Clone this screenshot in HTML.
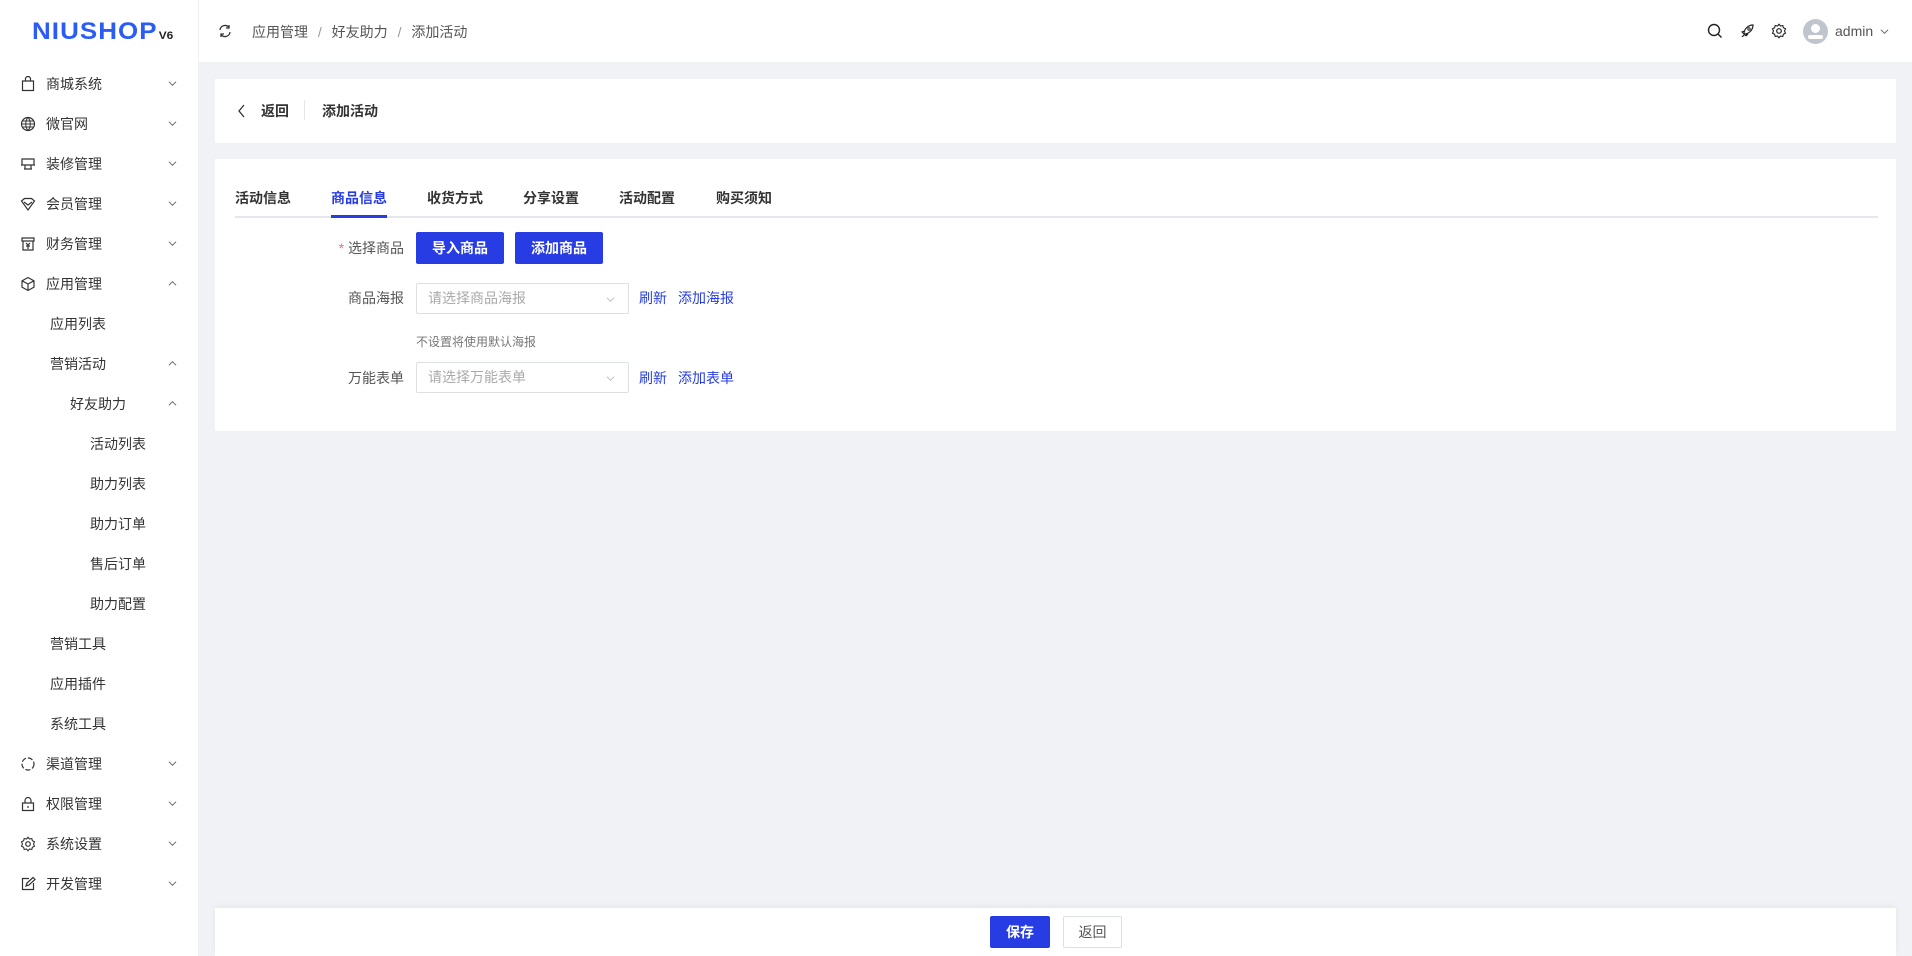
<!DOCTYPE html>
<html><head><meta charset="utf-8"><style>
*{margin:0;padding:0;box-sizing:border-box}
body{width:1912px;height:956px;overflow:hidden;background:#f0f2f5;font-family:"Liberation Sans","Noto Sans CJK SC",sans-serif;font-size:14px;color:#333;position:relative}
.side{position:absolute;left:0;top:0;width:199px;height:956px;background:#fff;border-right:1px solid #eef0f3}
.logo{position:absolute;left:32px;top:18px;font-weight:bold;font-size:24px;color:#2b5cf6;letter-spacing:1px;font-family:"Liberation Sans",sans-serif;transform:scaleX(1.08);transform-origin:left}
.logo small{font-size:11px;color:#222;margin-left:1px;letter-spacing:0}
.mi{position:absolute;left:0;width:199px;height:20px;line-height:20px;font-size:14px;color:#333}
.mi .ic{position:absolute;left:20px;top:2px;width:16px;height:16px}
.mi .chev{position:absolute;left:168px;top:5px;width:9px;height:9px}
.head{position:absolute;left:199px;top:0;right:0;height:62px;background:#fff}
.card{position:absolute;background:#fff}
.tab{position:absolute;top:188px;font-size:14px;font-weight:bold;color:#333}
.lbl{position:absolute;width:120px;text-align:right;left:284px;font-size:14px;color:#555}
.btn{position:absolute;background:#273de3;color:#fff;font-weight:bold;font-size:14px;text-align:center;border-radius:2px}
.sel{position:absolute;left:416px;width:213px;height:31px;border:1px solid #dcdfe6;border-radius:2px;color:#aaa;font-size:14px;line-height:29px;padding-left:11px}
.lnk{position:absolute;color:#273de3;font-size:14px}
</style></head><body>
<div class="side">
<div class="logo">NIUSHOP<small>V6</small></div>
</div>
<svg width="0" height="0" style="position:absolute"><defs>
<symbol id="cd" viewBox="0 0 10 10"><path d="M1 3l4 4 4-4" fill="none" stroke="#666" stroke-width="1.1"/></symbol>
<symbol id="cu" viewBox="0 0 10 10"><path d="M1 7l4-4 4 4" fill="none" stroke="#666" stroke-width="1.1"/></symbol>
</defs></svg>
<div class="mi" style="top:74px"><svg class="ic" viewBox="0 0 16 16"><path d="M2.5 5h11v9.5h-11zM5.5 5V3a2.5 2.5 0 015 0v2" fill="none" stroke="#333" stroke-width="1.2"/></svg><span style="position:absolute;left:46px">商城系统</span><svg class="chev"><use href="#cd"/></svg></div>
<div class="mi" style="top:114px"><svg class="ic" viewBox="0 0 16 16"><circle cx="8" cy="8" r="6.5" fill="none" stroke="#333" stroke-width="1.2"/><path d="M1.5 8h13M8 1.5c-3 3-3 10 0 13M8 1.5c3 3 3 10 0 13M2.5 5h11M2.5 11h11" fill="none" stroke="#333" stroke-width="1"/></svg><span style="position:absolute;left:46px">微官网</span><svg class="chev"><use href="#cd"/></svg></div>
<div class="mi" style="top:154px"><svg class="ic" viewBox="0 0 16 16"><path d="M2 3h12v6H2zM1 9h14M5 9v4M11 9v4M4 13h8" fill="none" stroke="#333" stroke-width="1.2"/></svg><span style="position:absolute;left:46px">装修管理</span><svg class="chev"><use href="#cd"/></svg></div>
<div class="mi" style="top:194px"><svg class="ic" viewBox="0 0 16 16"><path d="M1.5 5l3-2.5h7l3 2.5L8 14z M4 6l4 3 4-3" fill="none" stroke="#333" stroke-width="1.2"/></svg><span style="position:absolute;left:46px">会员管理</span><svg class="chev"><use href="#cd"/></svg></div>
<div class="mi" style="top:234px"><svg class="ic" viewBox="0 0 16 16"><path d="M2 2h12v3H2zM3 5v9h10V5M6 7l2 2 2-2M8 9v4M6 10h4" fill="none" stroke="#333" stroke-width="1.2"/></svg><span style="position:absolute;left:46px">财务管理</span><svg class="chev"><use href="#cd"/></svg></div>
<div class="mi" style="top:274px"><svg class="ic" viewBox="0 0 16 16"><path d="M8 1.5l6 3.3v6.4L8 14.5 2 11.2V4.8zM2 4.8L8 8l6-3.2M8 8v6.5" fill="none" stroke="#333" stroke-width="1.2"/></svg><span style="position:absolute;left:46px">应用管理</span><svg class="chev"><use href="#cu"/></svg></div>
<div class="mi" style="top:314px"><span style="position:absolute;left:50px">应用列表</span></div>
<div class="mi" style="top:354px"><span style="position:absolute;left:50px">营销活动</span><svg class="chev"><use href="#cu"/></svg></div>
<div class="mi" style="top:394px"><span style="position:absolute;left:70px">好友助力</span><svg class="chev"><use href="#cu"/></svg></div>
<div class="mi" style="top:434px"><span style="position:absolute;left:90px">活动列表</span></div>
<div class="mi" style="top:474px"><span style="position:absolute;left:90px">助力列表</span></div>
<div class="mi" style="top:514px"><span style="position:absolute;left:90px">助力订单</span></div>
<div class="mi" style="top:554px"><span style="position:absolute;left:90px">售后订单</span></div>
<div class="mi" style="top:594px"><span style="position:absolute;left:90px">助力配置</span></div>
<div class="mi" style="top:634px"><span style="position:absolute;left:50px">营销工具</span></div>
<div class="mi" style="top:674px"><span style="position:absolute;left:50px">应用插件</span></div>
<div class="mi" style="top:714px"><span style="position:absolute;left:50px">系统工具</span></div>
<div class="mi" style="top:754px"><svg class="ic" viewBox="0 0 16 16"><circle cx="8" cy="8" r="6" fill="none" stroke="#333" stroke-width="1.2" stroke-dasharray="5 2"/></svg><span style="position:absolute;left:46px">渠道管理</span><svg class="chev"><use href="#cd"/></svg></div>
<div class="mi" style="top:794px"><svg class="ic" viewBox="0 0 16 16"><path d="M2.5 7h11v7.5h-11zM5 7V4.5a3 3 0 016 0V7M8 10v2" fill="none" stroke="#333" stroke-width="1.2"/></svg><span style="position:absolute;left:46px">权限管理</span><svg class="chev"><use href="#cd"/></svg></div>
<div class="mi" style="top:834px"><svg class="ic" viewBox="0 0 16 16"><circle cx="8" cy="8" r="2.3" fill="none" stroke="#333" stroke-width="1.2"/><path d="M8 1.2l1.5 1.8 2.3-.5.6 2.3 2.1 1-1 2.2 1 2.2-2.1 1-.6 2.3-2.3-.5L8 14.8l-1.5-1.8-2.3.5-.6-2.3-2.1-1 1-2.2-1-2.2 2.1-1 .6-2.3 2.3.5z" fill="none" stroke="#333" stroke-width="1.1"/></svg><span style="position:absolute;left:46px">系统设置</span><svg class="chev"><use href="#cd"/></svg></div>
<div class="mi" style="top:874px"><svg class="ic" viewBox="0 0 16 16"><path d="M9 2.5H2.5v11h11V7M6 10l1-3 6-5.5 2 2L9 9z" fill="none" stroke="#333" stroke-width="1.2"/></svg><span style="position:absolute;left:46px">开发管理</span><svg class="chev"><use href="#cd"/></svg></div>

<div class="head">
<svg style="position:absolute;left:19px;top:24px" width="14" height="14" viewBox="0 0 14 14"><path d="M2 6a5 5 0 019-2.5M12 8a5 5 0 01-9 2.5M11 1v3H8M3 13v-3h3" fill="none" stroke="#333" stroke-width="1.3"/></svg>
<div style="position:absolute;left:53px;top:22px;font-size:14px;color:#555">应用管理 <span style="color:#999;margin:0 6px">/</span> 好友助力 <span style="color:#999;margin:0 6px">/</span> 添加活动</div>
<svg style="position:absolute;left:1508px;top:23px" width="16" height="16" viewBox="0 0 16 16"><circle cx="7" cy="7" r="5.5" fill="none" stroke="#222" stroke-width="1.4"/><path d="M11 11l3.5 3.5" stroke="#222" stroke-width="1.4"/></svg>
<svg style="position:absolute;left:1540px;top:23px" width="16" height="16" viewBox="0 0 16 16"><path d="M5 11c0-5 4-9 9-9 0 5-4 9-9 9zM5 11l-2-2 2.5-1M7 13l-2-2M8 10.5l-1 2.5 2-2M3 14l2-2" fill="none" stroke="#222" stroke-width="1.2"/><circle cx="10" cy="6" r="1.2" fill="none" stroke="#222"/></svg>
<svg style="position:absolute;left:1572px;top:23px" width="16" height="16" viewBox="0 0 16 16"><circle cx="8" cy="8" r="2.3" fill="none" stroke="#222" stroke-width="1.2"/><path d="M8 1.2l1.5 1.8 2.3-.5.6 2.3 2.1 1-1 2.2 1 2.2-2.1 1-.6 2.3-2.3-.5L8 14.8l-1.5-1.8-2.3.5-.6-2.3-2.1-1 1-2.2-1-2.2 2.1-1 .6-2.3 2.3.5z" fill="none" stroke="#222" stroke-width="1.1"/></svg>
<div style="position:absolute;left:1604px;top:19px;width:25px;height:25px;border-radius:50%;background:#c0c4cc;overflow:hidden"><div style="position:absolute;left:8px;top:5px;width:9px;height:9px;border-radius:50%;background:#fff"></div><div style="position:absolute;left:5px;top:16px;width:15px;height:4px;border-radius:2px;background:#fff"></div></div>
<div style="position:absolute;left:1636px;top:23px;font-size:14px;color:#555">admin</div>
<svg style="position:absolute;left:1680px;top:27px" width="11" height="9" viewBox="0 0 10 10"><path d="M1 3l4 4 4-4" fill="none" stroke="#666" stroke-width="1.1"/></svg>
</div>

<div class="card" style="left:215px;top:79px;width:1681px;height:64px">
<svg style="position:absolute;left:22px;top:25px" width="10" height="14" viewBox="0 0 10 14"><path d="M7 1L2 7l5 6" fill="none" stroke="#333" stroke-width="1.3"/></svg>
<div style="position:absolute;left:46px;top:22px;font-weight:bold;font-size:14px">返回</div>
<div style="position:absolute;left:89px;top:21px;width:1px;height:20px;background:#e4e6eb"></div>
<div style="position:absolute;left:107px;top:22px;font-weight:bold;font-size:14px">添加活动</div>
</div>

<div class="card" style="left:215px;top:159px;width:1681px;height:272px"></div>
<div style="position:absolute;left:235px;top:216px;width:1643px;height:2px;background:#e4e7ed"></div>
<div style="position:absolute;left:331px;top:215px;width:56px;height:3px;background:#273de3"></div>
<div class="tab" style="left:235px">活动信息</div>
<div class="tab" style="left:331px;color:#273de3">商品信息</div>
<div class="tab" style="left:427px">收货方式</div>
<div class="tab" style="left:523px">分享设置</div>
<div class="tab" style="left:619px">活动配置</div>
<div class="tab" style="left:716px">购买须知</div>

<div class="lbl" style="top:238px"><span style="color:#f56c6c">* </span>选择商品</div>
<div class="btn" style="left:416px;top:232px;width:88px;height:32px;line-height:32px">导入商品</div>
<div class="btn" style="left:515px;top:232px;width:88px;height:32px;line-height:32px">添加商品</div>

<div class="lbl" style="top:288px">商品海报</div>
<div class="sel" style="top:283px">请选择商品海报<svg style="position:absolute;right:12px;top:11px" width="11" height="9" viewBox="0 0 10 10"><path d="M1 3l4 4 4-4" fill="none" stroke="#bbb" stroke-width="1"/></svg></div>
<div class="lnk" style="left:639px;top:288px">刷新</div>
<div class="lnk" style="left:678px;top:288px">添加海报</div>
<div style="position:absolute;left:416px;top:333px;font-size:12px;color:#777">不设置将使用默认海报</div>

<div class="lbl" style="top:368px">万能表单</div>
<div class="sel" style="top:362px">请选择万能表单<svg style="position:absolute;right:12px;top:11px" width="11" height="9" viewBox="0 0 10 10"><path d="M1 3l4 4 4-4" fill="none" stroke="#bbb" stroke-width="1"/></svg></div>
<div class="lnk" style="left:639px;top:368px">刷新</div>
<div class="lnk" style="left:678px;top:368px">添加表单</div>

<div class="card" style="left:215px;top:908px;width:1681px;height:48px;box-shadow:0 -2px 6px rgba(0,0,0,.05)">
<div class="btn" style="left:775px;top:8px;width:60px;height:32px;line-height:32px">保存</div>
<div style="position:absolute;left:848px;top:8px;width:59px;height:32px;line-height:30px;border:1px solid #dcdfe6;text-align:center;color:#555;border-radius:2px">返回</div>
</div>
</body></html>
